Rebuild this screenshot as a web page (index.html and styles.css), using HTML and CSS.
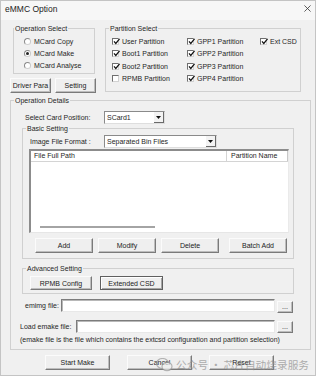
FILE: index.html
```html
<!DOCTYPE html>
<html>
<head>
<meta charset="utf-8">
<title>eMMC Option</title>
<link rel="stylesheet" href="styles.css">
</head>
<body>
<div class="window">
  <div class="titlebar">
    <span class="title">eMMC Option</span>
    <svg class="close" width="8" height="8" viewBox="0 0 8 8"><path d="M0.5 0.5 L7.5 7.5 M7.5 0.5 L0.5 7.5" stroke="#333" stroke-width="0.9" fill="none"/></svg>
  </div>
  <div class="main">
    <div class="row1">
      <div class="leftcol">
        <div class="group opsel">
          <div class="legend">Operation Select</div>
          <div class="opts">
            <div class="opt"><span class="rb"></span>MCard Copy</div>
            <div class="opt"><span class="rb on"></span>MCard Make</div>
            <div class="opt"><span class="rb"></span>MCard Analyse</div>
          </div>
        </div>
        <div class="btnrow">
          <button class="btn w41">Driver Para</button>
          <button class="btn w41 ml4">Setting</button>
        </div>
      </div>
      <div class="group partsel">
        <div class="legend">Partition Select</div>
        <div class="cbgrid">
          <div class="cb"><span class="box"><svg viewBox="0 0 7 7"><polyline points="1,3.4 2.8,5.4 6.6,0.8" fill="none" stroke="#111" stroke-width="1.3"/></svg></span>User Partition</div>
          <div class="cb"><span class="box"><svg viewBox="0 0 7 7"><polyline points="1,3.4 2.8,5.4 6.6,0.8" fill="none" stroke="#111" stroke-width="1.3"/></svg></span>Boot1 Partition</div>
          <div class="cb"><span class="box"><svg viewBox="0 0 7 7"><polyline points="1,3.4 2.8,5.4 6.6,0.8" fill="none" stroke="#111" stroke-width="1.3"/></svg></span>Boot2 Partition</div>
          <div class="cb"><span class="box"></span>RPMB Partition</div>
          <div class="cb"><span class="box"><svg viewBox="0 0 7 7"><polyline points="1,3.4 2.8,5.4 6.6,0.8" fill="none" stroke="#111" stroke-width="1.3"/></svg></span>GPP1 Partition</div>
          <div class="cb"><span class="box"><svg viewBox="0 0 7 7"><polyline points="1,3.4 2.8,5.4 6.6,0.8" fill="none" stroke="#111" stroke-width="1.3"/></svg></span>GPP2 Partition</div>
          <div class="cb"><span class="box"><svg viewBox="0 0 7 7"><polyline points="1,3.4 2.8,5.4 6.6,0.8" fill="none" stroke="#111" stroke-width="1.3"/></svg></span>GPP3 Partition</div>
          <div class="cb"><span class="box"><svg viewBox="0 0 7 7"><polyline points="1,3.4 2.8,5.4 6.6,0.8" fill="none" stroke="#111" stroke-width="1.3"/></svg></span>GPP4 Partition</div>
          <div class="cb"><span class="box"><svg viewBox="0 0 7 7"><polyline points="1,3.4 2.8,5.4 6.6,0.8" fill="none" stroke="#111" stroke-width="1.3"/></svg></span>Ext CSD</div>
        </div>
      </div>
    </div>

    <div class="group opdet">
      <div class="legend">Operation Details</div>
      <div class="field cardrow">
        <span class="lbl lbl-card">Select Card Position:</span>
        <div class="combo w61"><span class="ctext">SCard1</span><span class="carrow"><svg width="5" height="3" viewBox="0 0 5 3"><path d="M0 0 H5 L2.5 3 Z" fill="#111"/></svg></span></div>
      </div>

      <div class="group basic">
        <div class="legend">Basic Setting</div>
        <div class="field imgrow">
          <span class="lbl lbl-img">Image File Format :</span>
          <div class="combo w113"><span class="ctext">Separated Bin Files</span><span class="carrow"><svg width="5" height="3" viewBox="0 0 5 3"><path d="M0 0 H5 L2.5 3 Z" fill="#111"/></svg></span></div>
        </div>
        <div class="list">
          <div class="lhead">
            <span class="hc hc1">File Full Path</span>
            <span class="hc hc2">Partition Name</span>
          </div>
          <div class="lbody"></div>
          <div class="lscroll"><span class="thumb"></span></div>
        </div>
        <div class="listbtns">
          <button class="btn w58">Add</button>
          <button class="btn w58 ml5">Modify</button>
          <button class="btn w58 ml5">Delete</button>
          <button class="btn w58 ml10">Batch Add</button>
        </div>
      </div>

      <div class="group adv">
        <div class="legend">Advanced Setting</div>
        <div class="advbtns">
          <button class="btn h14 w62">RPMB Config</button>
          <button class="btn h14 w63 ml8 focus">Extended CSD</button>
        </div>
      </div>

      <div class="field filerow r1">
        <span class="lbl lbl-emimg">emimg file:</span>
        <div class="input w214"></div>
        <button class="btn dots d1">...</button>
      </div>
      <div class="field filerow r2">
        <span class="lbl lbl-load">Load emake file:</span>
        <div class="input w199"></div>
        <button class="btn dots">...</button>
      </div>
      <div class="note">(emake file is the file which contains the extcsd configuration and partition selection)</div>
    </div>

    <div class="actions">
      <button class="btn w65">Start Make</button>
      <button class="btn w65">Cancel</button>
      <button class="btn w65">Reset</button>
    </div>
  </div>

  <div class="watermark">
    <svg class="wxicon" width="17" height="14" viewBox="0 0 17 14"><ellipse cx="6.5" cy="5.5" rx="6" ry="5" fill="none" stroke="#9a9a9a" stroke-width="1.2"/><ellipse cx="11" cy="8.5" rx="5" ry="4.2" fill="#f0f0f0" stroke="#9a9a9a" stroke-width="1.2"/></svg>
    <span class="wmtext">公众号 · 芯片自动烧录服务</span>
  </div>
</div>
</body>
</html>
```

FILE: styles.css
```css
* { box-sizing: border-box; }
html, body { margin: 0; padding: 0; }
body {
  width: 320px;
  height: 380px;
  overflow: hidden;
  background: #ffffff;
  font-family: "Liberation Sans", Arial, sans-serif;
  font-size: 7px;
  color: #262626;
}
.window {
  position: relative;
  width: 316px;
  height: 376px;
  background: #f0f0f0;
  border: 1px solid #c4c4c4;
}
.titlebar {
  height: 19px;
  background: #f7f7f7;
  display: flex;
  justify-content: space-between;
  align-items: flex-start;
  padding: 3px 4px 0 4px;
}
.title { font-size: 8.5px; line-height: 10px; color: #222; }
.close { display: block; margin-top: 1px; width: 7px; height: 7px; }

.main { padding: 8px 0 0 9px; }

.group { border: 1px solid #d0d0d0; }
.legend {
  display: table;
  margin: -5px 0 0 3px;
  padding: 0 1px;
  height: 10px;
  line-height: 10px;
  background: #f0f0f0;
  white-space: nowrap;
}

.row1 { display: flex; }
.leftcol { width: 86px; }
.opsel { margin-left: 3px; width: 82px; height: 46px; }
.opsel .legend { margin-left: 0; }
.opts { padding-top: 1px; }
.opt { height: 12px; display: flex; align-items: center; padding-left: 10px; white-space: nowrap; }
.rb {
  width: 7px; height: 7px;
  border-radius: 50%;
  border: 1px solid #8a8a8a;
  border-bottom-color: #d0d0d0;
  border-right-color: #c8c8c8;
  background: #fff;
  margin-right: 3px;
  display: flex; align-items: center; justify-content: center;
}
.rb.on::after { content: ""; width: 3px; height: 3px; border-radius: 50%; background: #222; }

.btnrow { display: flex; margin-top: 4px; }

.btn {
  font: inherit;
  color: #222;
  height: 15px;
  padding: 0;
  background: #efefef;
  border: 1px solid;
  border-color: #fbfbfb #7a7a7a #7a7a7a #fbfbfb;
  box-shadow: inset -1px -1px #bdbdbd;
  white-space: nowrap;
}
.btn.focus {
  border-color: #5f5f5f;
  box-shadow: inset 1px 1px #fff, inset -1px -1px #a5a5a5;
}
.h14 { height: 14px; }
.w41 { width: 41px; }
.w58 { width: 58px; }
.w62 { width: 62px; }
.w63 { width: 63px; }
.w65 { width: 65px; }
.ml4 { margin-left: 4px; }
.ml5 { margin-left: 5px; }
.ml8 { margin-left: 8px; }
.ml10 { margin-left: 10px; }

.partsel { margin-left: 9px; width: 196px; height: 64px; }
.cbgrid {
  display: grid;
  grid-template-columns: 75px 73px 1fr;
  grid-template-rows: repeat(4, 12.5px);
  grid-auto-flow: column;
  padding-left: 6px;
  margin-top: 1px;
}
.cb { display: flex; align-items: center; white-space: nowrap; }
.box {
  width: 7px; height: 7px;
  background: #fff;
  border: 1px solid;
  border-color: #6f6f6f #d2d2d2 #d2d2d2 #6f6f6f;
  margin-right: 3px;
  position: relative;
  flex: none;
}
.box svg { display: block; width: 7px; height: 7px; margin: -1px 0 0 0; }

.opdet { margin-top: 7px; width: 301px; height: 250px; }
.field { display: flex; align-items: center; height: 13px; }
.cardrow { margin-top: 5px; }
.lbl { white-space: nowrap; flex: none; }
.lbl-card { padding-left: 14px; width: 93px; }

.combo {
  display: flex;
  height: 13px;
  background: #fff;
  border: 1px solid;
  border-color: #8a8a8a #dedede #dedede #8a8a8a;
}
.w61 { width: 61px; }
.w113 { width: 113px; }
.ctext { flex: 1; padding-left: 2px; line-height: 11px; white-space: nowrap; overflow: hidden; }
.carrow {
  width: 10px;
  display: flex; align-items: center; justify-content: center;
  background: #f3f3f3;
  border-right: 1px solid #6a6a6a;
  border-bottom: 1px solid #6a6a6a;
}
.carrow svg { display: block; }

.basic { margin: 4px 0 0 11px; width: 272px; height: 131px; }
.imgrow { margin-top: 1px; }
.lbl-img { padding-left: 7px; width: 81px; }

.list {
  margin: 1px 0 0 6px;
  width: 260px;
  height: 84px;
  background: #fff;
  border-style: solid;
  border-width: 2px 1px 1px 2px;
  border-color: #8c8c8c #eaeaea #e6e6e6 #8c8c8c;
  display: flex;
  flex-direction: column;
}
.lhead { display: flex; height: 11px; border-bottom: 1px solid #d4d4d4; flex: none; }
.hc { line-height: 10px; white-space: nowrap; }
.hc1 { width: 196px; padding-left: 3px; border-right: 1px solid #d4d4d4; }
.hc2 { flex: 1; padding-left: 4px; border-right: 1px solid #c8c8c8; }
.lbody { flex: 1; }
.lscroll { height: 6px; padding-left: 9px; flex: none; }
.thumb { display: block; width: 115px; height: 2px; background: #a4a4a4; }

.listbtns { display: flex; margin: 5px 0 0 12px; }

.adv { margin: 9px 0 0 11px; width: 272px; height: 26px; }
.advbtns { display: flex; margin: 2px 0 0 7px; }

.filerow.r1 { margin-top: 5px; }
.filerow.r2 { margin-top: 8px; }
.lbl-emimg { padding-left: 14px; width: 50px; }
.lbl-load { padding-left: 9px; width: 65px; }
.input {
  height: 13px;
  background: #fff;
  border: 1px solid;
  border-color: #7c7c7c #e8e8e8 #e8e8e8 #7c7c7c;
  box-shadow: inset 1px 1px #b8b8b8;
}
.w214 { width: 214px; }
.w199 { width: 199px; }
.dots { width: 16px; height: 12px; margin-left: 2px; line-height: 8px; align-self: flex-end; }
.d1 { margin-bottom: -1px; }

.note { margin-top: 2px; padding-left: 9px; line-height: 10px; white-space: nowrap; }

.actions { display: flex; gap: 17px; margin: 5px 0 0 35px; }

.watermark {
  position: absolute;
  left: 155px;
  top: 357px;
  display: flex;
  align-items: center;
  gap: 3px;
  opacity: 0.7;
}
.wxicon { display: block; }
.wmtext {
  font-family: "Noto Sans CJK SC", "Noto Sans", sans-serif;
  font-size: 10.7px;
  line-height: 14px;
  color: #8f8f8f;
  white-space: nowrap;
}
```
